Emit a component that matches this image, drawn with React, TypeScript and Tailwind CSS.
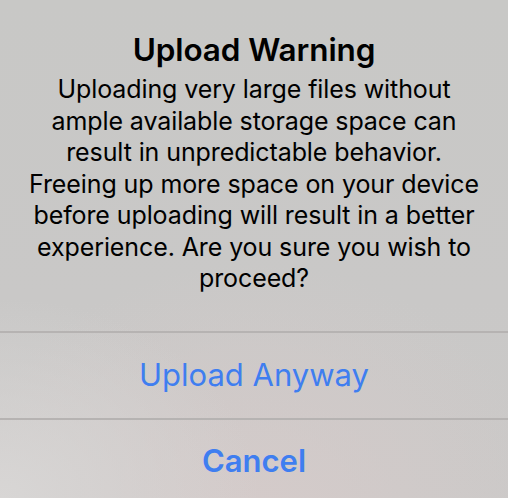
export default function App() {
  return (
    <div
      className="w-[508px] h-[498px] overflow-hidden flex flex-col bg-[radial-gradient(ellipse_260px_200px_at_0%_100%,#d8d6d5_0%,rgba(216,214,213,0)_100%),radial-gradient(ellipse_300px_260px_at_50%_105%,#d5cbca_0%,rgba(213,203,202,0)_100%),linear-gradient(180deg,#c8c8c6_0%,#c9c8c7_60%,#cbc9c8_100%)] text-black"
      style={{ fontFamily: "Inter, 'Noto Sans', sans-serif" }}
    >
      {/* Message */}
      <div className="flex flex-col items-center pt-[32px] h-[331px]">
        <h2 className="text-[31.5px] leading-[36px] font-semibold tracking-[-0.1px]">Upload Warning</h2>
        <p className="mt-[6px] text-center text-[25px] leading-[31.5px] tracking-[-0.1px] whitespace-nowrap">
          Uploading very large files without
          <br />
          ample available storage space can
          <br />
          result in unpredictable behavior.
          <br />
          Freeing up more space on your device
          <br />
          before uploading will result in a better
          <br />
          experience. Are you sure you wish to
          <br />
          proceed?
        </p>
      </div>

      <div className="h-[2px] bg-[#b6b3b2]" />

      <button className="h-[85px] flex items-center justify-center text-[31px] text-[#3f7ef0]">
        Upload Anyway
      </button>

      <div className="h-[2px] bg-[#b6b3b2]" />

      <button className="flex-1 flex items-center justify-center pt-[4px] text-[31px] font-semibold text-[#3f7ef0]">
        Cancel
      </button>
    </div>
  );
}
